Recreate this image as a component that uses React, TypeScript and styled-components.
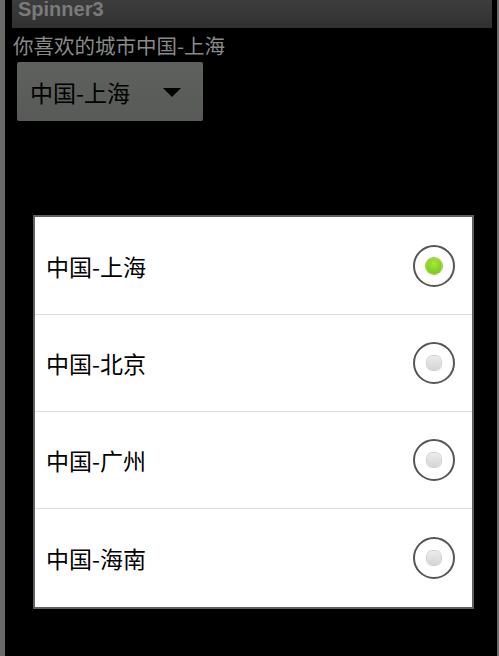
import React from "react";
import styled, { createGlobalStyle } from "styled-components";

const Global = createGlobalStyle`
  html, body { margin: 0; padding: 0; background: #000; }
  body { font-family: "Noto Sans CJK SC", "Noto Sans", sans-serif; }
`;

const Screen = styled.div`
  display: flex;
  width: 499px;
  height: 656px;
  background: #000;
  overflow: hidden;
`;

const Edge = styled.div<{ $w: number }>`
  width: ${(p) => p.$w}px;
  flex: none;
  background: #6a6a6a;
`;

const Main = styled.div`
  flex: 1;
  display: flex;
  flex-direction: column;
  background: #000;
`;

const TitleBar = styled.div`
  margin: 0 5px 0 7px;
  height: 28px;
  background: linear-gradient(#3d3d3d, #2f302f);
  display: flex;
  align-items: flex-start;
  padding-left: 6px;
  overflow: hidden;
`;

const Title = styled.div`
  font-family: "Liberation Sans", Arial, sans-serif;
  font-weight: bold;
  font-size: 20px;
  line-height: 20px;
  margin-top: -1px;
  color: #7a7a7a;
`;

const Label = styled.div`
  margin: 4px 0 0 8px;
  font-size: 20.5px;
  line-height: 26px;
  color: #8a8a8a;
`;

const SpinnerBtn = styled.div`
  margin: 4px 0 0 12px;
  width: 186px;
  height: 59px;
  border-radius: 2px;
  background: linear-gradient(#5e615e, #575a57);
  display: flex;
  align-items: center;
  padding-left: 13px;
  box-sizing: border-box;
`;

const SpinnerText = styled.span`
  font-size: 23px;
  color: #000;
  flex: 1;
`;

const Arrow = styled.span`
  width: 0;
  height: 0;
  border-left: 9px solid transparent;
  border-right: 9px solid transparent;
  border-top: 9px solid #000;
  margin-right: 22px;
  margin-top: 2px;
`;

const Dialog = styled.div`
  margin: 94px 0 0 28px;
  width: 441px;
  height: 394px;
  box-sizing: border-box;
  border: 2px solid #606060;
  background: #fff;
  display: flex;
  flex-direction: column;
`;

const Row = styled.div<{ $last?: boolean; $h: number }>`
  height: ${(p) => p.$h}px;
  flex: none;
  display: flex;
  align-items: center;
  justify-content: space-between;
  padding: 0 17px 0 11px;
  box-sizing: border-box;
  border-bottom: ${(p) => (p.$last ? "none" : "1px solid #dcdcdc")};
`;

const RowText = styled.span`
  font-size: 23px;
  color: #000;
`;

const Radio = styled.span`
  width: 42px;
  height: 42px;
  box-sizing: border-box;
  border: 2px solid #565656;
  border-radius: 50%;
  display: flex;
  align-items: center;
  justify-content: center;
  background: #fff;
`;

const Dot = styled.span<{ $on: boolean }>`
  width: ${(p) => (p.$on ? 16 : 14)}px;
  height: ${(p) => (p.$on ? 16 : 14)}px;
  border-radius: ${(p) => (p.$on ? "50%" : "40%")};
  background: ${(p) =>
    p.$on
      ? "radial-gradient(circle at 50% 35%, #a6e83a, #7fcc1c 70%, #6cb514)"
      : "linear-gradient(#ececec, #d4d4d4)"};
  box-shadow: ${(p) => (p.$on ? "0 0 0 1px #8fc94a" : "0 0 0 1px #d0d0d0")};
`;

const cities = ["中国-上海", "中国-北京", "中国-广州", "中国-海南"];
const heights = [98, 97, 97, 98];

export default function App() {
  return (
    <>
      <Global />
      <Screen>
        <Edge $w={5} />
        <Main>
          <TitleBar>
            <Title>Spinner3</Title>
          </TitleBar>
          <Label>你喜欢的城市中国-上海</Label>
          <SpinnerBtn>
            <SpinnerText>中国-上海</SpinnerText>
            <Arrow />
          </SpinnerBtn>
          <Dialog>
            {cities.map((c, i) => (
              <Row key={c} $h={heights[i]} $last={i === cities.length - 1}>
                <RowText>{c}</RowText>
                <Radio>
                  <Dot $on={i === 0} />
                </Radio>
              </Row>
            ))}
          </Dialog>
        </Main>
        <Edge $w={2} />
      </Screen>
    </>
  );
}
